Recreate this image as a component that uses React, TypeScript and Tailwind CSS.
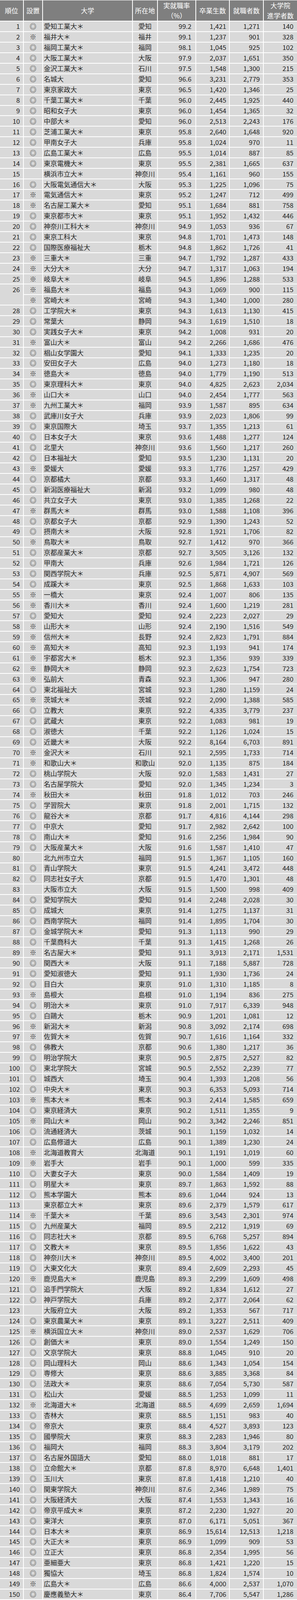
type Row = [number | null, string, string, string, string, string, string, string];

// 順位, 設置, 大学, 所在地, 実就職率, 卒業生数, 就職者数, 大学院進学者数
const rows: Row[] = [
  [1, '◎', '愛知工業大＊', '愛知', '99.2', '1,421', '1,271', '140'],
  [2, '※', '福井大＊', '福井', '99.1', '1,237', '901', '328'],
  [3, '◎', '福岡工業大＊', '福岡', '98.1', '1,045', '925', '102'],
  [4, '◎', '大阪工業大＊', '大阪', '97.9', '2,037', '1,651', '350'],
  [5, '◎', '金沢工業大＊', '石川', '97.5', '1,548', '1,300', '215'],
  [6, '◎', '名城大', '愛知', '96.6', '3,231', '2,779', '353'],
  [7, '◎', '東京家政大', '東京', '96.5', '1,420', '1,346', '25'],
  [8, '◎', '千葉工業大＊', '千葉', '96.0', '2,445', '1,925', '440'],
  [9, '◎', '昭和女子大', '東京', '96.0', '1,454', '1,365', '32'],
  [10, '◎', '中部大＊', '愛知', '96.0', '2,513', '2,243', '176'],
  [11, '◎', '芝浦工業大＊', '東京', '95.8', '2,640', '1,648', '920'],
  [12, '◎', '甲南女子大', '兵庫', '95.8', '1,024', '970', '11'],
  [13, '◎', '広島工業大＊', '広島', '95.5', '1,014', '887', '85'],
  [14, '◎', '東京電機大＊', '東京', '95.5', '2,381', '1,665', '637'],
  [15, '', '横浜市立大＊', '神奈川', '95.4', '1,161', '960', '155'],
  [16, '◎', '大阪電気通信大＊', '大阪', '95.3', '1,225', '1,096', '75'],
  [17, '※', '電気通信大＊', '東京', '95.2', '1,247', '712', '499'],
  [18, '※', '名古屋工業大＊', '愛知', '95.1', '1,684', '881', '758'],
  [19, '◎', '東京都市大＊', '東京', '95.1', '1,952', '1,432', '446'],
  [20, '◎', '神奈川工科大＊', '神奈川', '94.9', '1,053', '936', '67'],
  [21, '◎', '東京工科大', '東京', '94.8', '1,701', '1,473', '148'],
  [22, '◎', '国際医療福祉大', '栃木', '94.8', '1,862', '1,726', '41'],
  [23, '※', '三重大＊', '三重', '94.7', '1,792', '1,287', '433'],
  [24, '※', '大分大＊', '大分', '94.7', '1,317', '1,063', '194'],
  [25, '※', '岐阜大＊', '岐阜', '94.5', '1,896', '1,288', '533'],
  [26, '※', '福島大＊', '福島', '94.3', '1,069', '900', '115'],
  [null, '※', '宮崎大＊', '宮崎', '94.3', '1,340', '1,000', '280'],
  [28, '◎', '工学院大＊', '東京', '94.3', '1,613', '1,130', '415'],
  [29, '◎', '常葉大', '静岡', '94.3', '1,619', '1,510', '18'],
  [30, '◎', '実践女子大＊', '東京', '94.2', '1,008', '931', '20'],
  [31, '※', '富山大＊', '富山', '94.2', '2,266', '1,686', '476'],
  [32, '◎', '椙山女学園大', '愛知', '94.1', '1,333', '1,235', '20'],
  [33, '◎', '安田女子大', '広島', '94.0', '1,273', '1,180', '18'],
  [34, '※', '徳島大＊', '徳島', '94.0', '1,779', '1,190', '513'],
  [35, '◎', '東京理科大＊', '東京', '94.0', '4,825', '2,623', '2,034'],
  [36, '※', '山口大＊', '山口', '94.0', '2,454', '1,777', '563'],
  [37, '※', '九州工業大＊', '福岡', '93.9', '1,587', '895', '634'],
  [38, '◎', '武庫川女子大', '兵庫', '93.9', '2,023', '1,806', '99'],
  [39, '◎', '東京国際大', '埼玉', '93.7', '1,355', '1,213', '61'],
  [40, '◎', '日本女子大', '東京', '93.6', '1,488', '1,277', '124'],
  [41, '◎', '北里大', '神奈川', '93.6', '1,560', '1,217', '260'],
  [42, '◎', '日本福祉大', '愛知', '93.5', '1,230', '1,131', '20'],
  [43, '※', '愛媛大', '愛媛', '93.3', '1,776', '1,257', '429'],
  [44, '◎', '京都橘大', '京都', '93.3', '1,460', '1,317', '48'],
  [45, '◎', '新潟医療福祉大', '新潟', '93.2', '1,099', '980', '48'],
  [46, '◎', '共立女子大', '東京', '93.0', '1,385', '1,268', '22'],
  [47, '※', '群馬大＊', '群馬', '93.0', '1,588', '1,108', '396'],
  [48, '◎', '京都女子大', '京都', '92.9', '1,390', '1,243', '52'],
  [49, '◎', '摂南大＊', '大阪', '92.8', '1,921', '1,706', '82'],
  [50, '※', '鳥取大＊', '鳥取', '92.7', '1,412', '970', '366'],
  [51, '◎', '京都産業大＊', '京都', '92.7', '3,505', '3,126', '132'],
  [52, '◎', '甲南大', '兵庫', '92.6', '1,984', '1,721', '126'],
  [53, '◎', '関西学院大＊', '兵庫', '92.5', '5,871', '4,907', '569'],
  [54, '◎', '成蹊大＊', '東京', '92.5', '1,868', '1,633', '103'],
  [55, '※', '一橋大', '東京', '92.4', '1,007', '806', '135'],
  [56, '※', '香川大＊', '香川', '92.4', '1,600', '1,219', '281'],
  [57, '◎', '愛知大', '愛知', '92.4', '2,223', '2,027', '29'],
  [58, '※', '山形大＊', '山形', '92.4', '2,190', '1,516', '549'],
  [59, '※', '信州大＊', '長野', '92.4', '2,823', '1,791', '884'],
  [60, '※', '高知大＊', '高知', '92.3', '1,193', '941', '174'],
  [61, '※', '宇都宮大＊', '栃木', '92.3', '1,356', '939', '339'],
  [62, '※', '静岡大＊', '静岡', '92.3', '2,623', '1,754', '723'],
  [63, '※', '弘前大', '青森', '92.3', '1,306', '947', '280'],
  [64, '◎', '東北福祉大', '宮城', '92.3', '1,280', '1,159', '24'],
  [65, '※', '茨城大＊', '茨城', '92.2', '2,090', '1,388', '585'],
  [66, '◎', '立教大', '東京', '92.2', '4,335', '3,779', '237'],
  [67, '◎', '武蔵大', '東京', '92.2', '1,083', '981', '19'],
  [68, '◎', '淑徳大', '千葉', '92.2', '1,126', '1,024', '15'],
  [69, '◎', '近畿大＊', '大阪', '92.2', '8,164', '6,703', '891'],
  [70, '※', '金沢大＊', '石川', '92.1', '2,595', '1,733', '714'],
  [71, '※', '和歌山大＊', '和歌山', '92.0', '1,135', '875', '184'],
  [72, '◎', '桃山学院大', '大阪', '92.0', '1,583', '1,431', '27'],
  [73, '◎', '名古屋学院大', '愛知', '92.0', '1,345', '1,234', '3'],
  [74, '※', '秋田大＊', '秋田', '91.8', '1,012', '703', '246'],
  [75, '◎', '学習院大', '東京', '91.8', '2,001', '1,715', '132'],
  [76, '◎', '龍谷大＊', '京都', '91.7', '4,816', '4,144', '298'],
  [77, '◎', '中京大', '愛知', '91.7', '2,982', '2,642', '100'],
  [78, '◎', '南山大＊', '愛知', '91.6', '2,256', '1,984', '90'],
  [79, '◎', '大阪産業大＊', '大阪', '91.6', '1,587', '1,410', '47'],
  [80, '', '北九州市立大', '福岡', '91.5', '1,367', '1,105', '160'],
  [81, '◎', '青山学院大', '東京', '91.5', '4,241', '3,472', '448'],
  [82, '◎', '同志社女子大', '京都', '91.5', '1,470', '1,301', '48'],
  [83, '', '大阪市立大', '大阪', '91.5', '1,500', '998', '409'],
  [84, '◎', '愛知学院大', '愛知', '91.4', '2,248', '2,028', '30'],
  [85, '◎', '成城大', '東京', '91.4', '1,275', '1,137', '31'],
  [86, '◎', '西南学院大', '福岡', '91.4', '1,895', '1,704', '30'],
  [87, '◎', '金城学院大＊', '愛知', '91.3', '1,113', '990', '29'],
  [88, '◎', '千葉商科大', '千葉', '91.3', '1,415', '1,268', '26'],
  [89, '※', '名古屋大＊', '愛知', '91.1', '3,913', '2,171', '1,531'],
  [90, '◎', '関西大＊', '大阪', '91.1', '7,188', '5,887', '728'],
  [91, '◎', '愛知淑徳大', '愛知', '91.1', '1,930', '1,736', '24'],
  [92, '◎', '目白大', '東京', '91.0', '1,310', '1,185', '8'],
  [93, '※', '島根大', '島根', '91.0', '1,194', '836', '275'],
  [94, '◎', '明治大＊', '東京', '91.0', '7,917', '6,339', '948'],
  [95, '◎', '白鷗大', '栃木', '90.9', '1,201', '1,081', '12'],
  [96, '※', '新潟大＊', '新潟', '90.8', '3,092', '2,174', '698'],
  [97, '※', '佐賀大＊', '佐賀', '90.7', '1,616', '1,164', '332'],
  [98, '◎', '佛教大', '京都', '90.6', '1,380', '1,217', '36'],
  [99, '◎', '明治学院大', '東京', '90.5', '2,875', '2,527', '82'],
  [100, '◎', '東北学院大', '宮城', '90.5', '2,552', '2,239', '77'],
  [101, '◎', '城西大', '埼玉', '90.4', '1,393', '1,208', '56'],
  [102, '◎', '中央大＊', '東京', '90.3', '6,353', '5,093', '714'],
  [103, '※', '熊本大＊', '熊本', '90.3', '2,414', '1,585', '659'],
  [104, '◎', '東京経済大', '東京', '90.2', '1,511', '1,355', '9'],
  [105, '※', '岡山大＊', '岡山', '90.2', '3,342', '2,246', '851'],
  [106, '◎', '流通経済大', '茨城', '90.1', '1,159', '1,032', '14'],
  [107, '◎', '広島修道大', '広島', '90.1', '1,389', '1,230', '24'],
  [108, '※', '北海道教育大', '北海道', '90.1', '1,191', '1,019', '60'],
  [109, '※', '岩手大', '岩手', '90.1', '1,000', '599', '335'],
  [110, '◎', '大妻女子大', '東京', '90.0', '1,584', '1,409', '19'],
  [111, '◎', '明星大＊', '東京', '89.7', '1,863', '1,592', '88'],
  [112, '◎', '熊本学園大', '熊本', '89.6', '1,044', '924', '13'],
  [113, '', '東京都立大＊', '東京', '89.6', '2,379', '1,579', '617'],
  [114, '※', '千葉大＊', '千葉', '89.6', '3,543', '2,301', '974'],
  [115, '◎', '九州産業大', '福岡', '89.5', '2,212', '1,919', '69'],
  [116, '◎', '同志社大＊', '京都', '89.5', '6,768', '5,257', '894'],
  [117, '◎', '文教大＊', '東京', '89.5', '1,856', '1,622', '43'],
  [118, '◎', '神奈川大＊', '神奈川', '89.5', '4,002', '3,400', '201'],
  [119, '◎', '大東文化大', '東京', '89.4', '2,609', '2,293', '45'],
  [120, '※', '鹿児島大＊', '鹿児島', '89.3', '2,299', '1,609', '498'],
  [121, '◎', '追手門学院大', '大阪', '89.2', '1,834', '1,612', '27'],
  [122, '◎', '神戸学院大', '兵庫', '89.2', '2,377', '2,064', '62'],
  [123, '', '大阪府立大', '大阪', '89.2', '1,353', '567', '717'],
  [124, '◎', '東京農業大＊', '東京', '89.1', '3,227', '2,511', '409'],
  [125, '※', '横浜国立大＊', '神奈川', '89.0', '2,537', '1,629', '706'],
  [126, '◎', '創価大＊', '東京', '89.0', '1,554', '1,249', '150'],
  [127, '◎', '文京学院大', '東京', '88.8', '1,045', '910', '20'],
  [128, '◎', '岡山理科大', '岡山', '88.6', '1,343', '1,054', '154'],
  [129, '◎', '専修大', '東京', '88.6', '3,885', '3,368', '84'],
  [130, '◎', '法政大＊', '東京', '88.6', '7,054', '5,730', '587'],
  [131, '◎', '松山大', '愛媛', '88.5', '1,253', '1,099', '11'],
  [132, '※', '北海道大＊', '北海道', '88.5', '4,699', '2,659', '1,694'],
  [133, '◎', '杏林大', '東京', '88.5', '1,151', '983', '40'],
  [134, '◎', '帝京大', '東京', '88.4', '4,527', '3,893', '123'],
  [135, '◎', '國學院大', '東京', '88.3', '2,283', '1,946', '80'],
  [136, '◎', '福岡大', '福岡', '88.3', '3,804', '3,179', '202'],
  [137, '◎', '名古屋外国語大', '愛知', '88.0', '1,018', '881', '17'],
  [138, '◎', '立命館大＊', '京都', '87.8', '8,970', '6,648', '1,401'],
  [139, '◎', '玉川大', '東京', '87.8', '1,418', '1,210', '40'],
  [140, '◎', '関東学院大', '神奈川', '87.6', '2,346', '1,989', '75'],
  [141, '◎', '大阪経済大', '大阪', '87.4', '1,553', '1,343', '16'],
  [142, '◎', '帝京平成大＊', '東京', '87.2', '2,230', '1,927', '20'],
  [143, '◎', '東洋大', '東京', '87.0', '6,171', '5,051', '367'],
  [144, '◎', '日本大＊', '東京', '86.9', '15,614', '12,513', '1,218'],
  [145, '◎', '大正大＊', '東京', '86.9', '1,099', '909', '53'],
  [146, '◎', '立正大', '東京', '86.8', '2,354', '1,995', '56'],
  [147, '◎', '亜細亜大', '東京', '86.8', '1,421', '1,220', '15'],
  [148, '◎', '獨協大', '埼玉', '86.8', '1,824', '1,574', '10'],
  [149, '※', '広島大＊', '広島', '86.6', '4,000', '2,537', '1,070'],
  [150, '◎', '慶應義塾大＊', '東京', '86.4', '7,706', '5,547', '1,286'],
];

const head = 'h-[52px] flex items-center justify-center text-center text-white leading-[26px] bg-[#7f7f7f] overflow-hidden';
const cell = 'h-[24.94px] flex items-center leading-[20px] bg-[#d9d9d9] overflow-hidden';

export default function App() {
  return (
    <div className="w-[760px] bg-white pt-[1px] pb-[2px] text-[17px] text-[#262626] font-[Noto_Sans_CJK_JP,sans-serif]">
      <div className="grid grid-cols-[59px_47px_228px_62px_96px_84px_85px_85px] gap-[2px]">
        {/* Header */}
        <div className={head}>順位</div>
        <div className={head}>設置</div>
        <div className={head}>大学</div>
        <div className={head}>所在地</div>
        <div className={head}>
          実就職率
          <br />
          （%）
        </div>
        <div className={head}>卒業生数</div>
        <div className={head}>就職者数</div>
        <div className={head}>
          大学院
          <br />
          進学者数
        </div>

        {/* Body */}
        {rows.map((r, i) => {
          const [rank, type, name, pref, rate, grads, jobs, grad] = r;
          // a tied rank shares one cell with the row below
          const tiedNext = i + 1 < rows.length && rows[i + 1][0] === null;
          return (
            <div key={i} className="contents">
              {rank !== null &&
                (tiedNext ? (
                  <div className="row-span-2 bg-[#d9d9d9]">
                    <div className="h-[24.94px] flex items-center justify-end pr-[8px] leading-[20px]">{rank}</div>
                  </div>
                ) : (
                  <div className={`${cell} justify-end pr-[8px]`}>{rank}</div>
                ))}
              <div className={`${cell} justify-center`}>{type}</div>
              <div className={`${cell} pl-[2px] whitespace-nowrap`}>{name}</div>
              <div className={`${cell} justify-center whitespace-nowrap`}>{pref}</div>
              <div className={`${cell} justify-end pr-[10px]`}>{rate}</div>
              <div className={`${cell} justify-end pr-[7px]`}>{grads}</div>
              <div className={`${cell} justify-end pr-[8px]`}>{jobs}</div>
              <div className={`${cell} justify-end pr-[9px]`}>{grad}</div>
            </div>
          );
        })}
      </div>
    </div>
  );
}
